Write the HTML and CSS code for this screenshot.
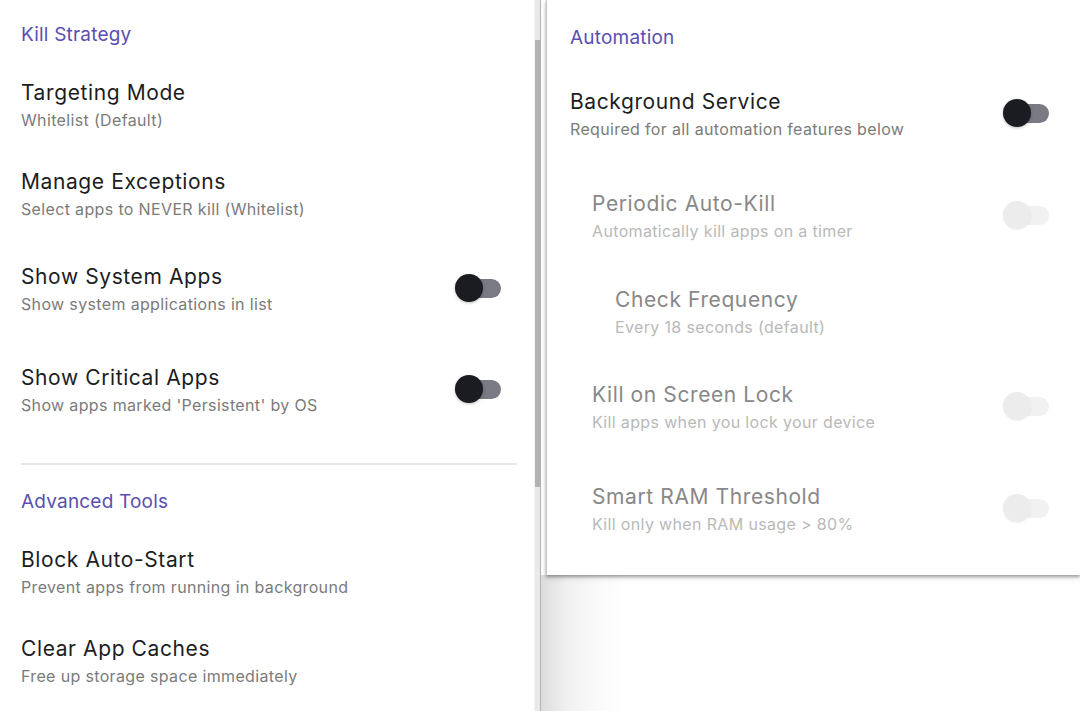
FILE: index.html
```html
<!DOCTYPE html>
<html>
<head>
<meta charset="utf-8">
<link rel="stylesheet" href="styles.css">
</head>
<body>
<div class="screen">
  <div class="left-pane">
    <div class="left-content">
      <div class="section-header first">Kill Strategy</div>
      <div class="row">
        <div class="text"><div class="title">Targeting Mode</div><div class="sub">Whitelist (Default)</div></div>
      </div>
      <div class="row">
        <div class="text"><div class="title">Manage Exceptions</div><div class="sub">Select apps to NEVER kill (Whitelist)</div></div>
      </div>
      <div class="row toggle-row">
        <div class="text"><div class="title">Show System Apps</div><div class="sub">Show system applications in list</div></div>
        <div class="toggle"><span class="track"></span><span class="knob"></span></div>
      </div>
      <div class="row toggle-row">
        <div class="text"><div class="title">Show Critical Apps</div><div class="sub">Show apps marked 'Persistent' by OS</div></div>
        <div class="toggle"><span class="track"></span><span class="knob"></span></div>
      </div>
      <div class="divider"></div>
      <div class="section-header">Advanced Tools</div>
      <div class="row">
        <div class="text"><div class="title">Block Auto-Start</div><div class="sub">Prevent apps from running in background</div></div>
      </div>
      <div class="row">
        <div class="text"><div class="title">Clear App Caches</div><div class="sub">Free up storage space immediately</div></div>
      </div>
    </div>
    <div class="scroll-track"><div class="scroll-thumb"></div></div>
  </div>
  <div class="right-side">
    <div class="panel">
      <div class="section-header first">Automation</div>
      <div class="row toggle-row">
        <div class="text"><div class="title">Background Service</div><div class="sub">Required for all automation features below</div></div>
        <div class="toggle"><span class="track"></span><span class="knob"></span></div>
      </div>
      <div class="row toggle-row disabled indent1">
        <div class="text"><div class="title">Periodic Auto-Kill</div><div class="sub">Automatically kill apps on a timer</div></div>
        <div class="toggle"><span class="track"></span><span class="knob"></span></div>
      </div>
      <div class="row disabled indent2">
        <div class="text"><div class="title">Check Frequency</div><div class="sub">Every 18 seconds (default)</div></div>
      </div>
      <div class="row toggle-row disabled indent1">
        <div class="text"><div class="title">Kill on Screen Lock</div><div class="sub">Kill apps when you lock your device</div></div>
        <div class="toggle"><span class="track"></span><span class="knob"></span></div>
      </div>
      <div class="row toggle-row disabled indent1">
        <div class="text"><div class="title">Smart RAM Threshold</div><div class="sub">Kill only when RAM usage &gt; 80%</div></div>
        <div class="toggle"><span class="track"></span><span class="knob"></span></div>
      </div>
    </div>
    <div class="below"></div>
  </div>
</div>
</body>
</html>
```
FILE: styles.css
```css
* { box-sizing: border-box; }
html, body {
  margin: 0;
  padding: 0;
  width: 1080px;
  height: 711px;
  overflow: hidden;
  background: #ffffff;
  font-family: Inter, "Noto Sans", "Liberation Sans", sans-serif;
}
.screen {
  display: flex;
  height: 711px;
}
.left-pane {
  width: 541px;
  display: flex;
  border-right: 1px solid #b4b4b4;
  background: #fff;
}
.left-content {
  width: 534px;
  padding: 0 17px 0 21px;
}
.scroll-track {
  width: 6px;
  background: #e9e9e9;
  border-left: 1px solid #f4f4f4;
}
.scroll-thumb {
  margin-top: 40px;
  height: 447px;
  background: #b3b3b3;
}
.section-header {
  font-size: 19px;
  line-height: 28px;
  color: #5a4fb0;
  margin-top: 23px;
  margin-bottom: 13px;
  letter-spacing: 0.2px;
}
.section-header.first { margin-top: 21px; }
.panel .section-header.first { margin-top: 24px; }
.row {
  display: flex;
  align-items: center;
  padding: 17px 0 18px;
}
.toggle-row { padding: 23px 0 24px; }
.panel .toggle-row { padding: 23px 0 25px; }
.text { flex: 1; }
.title {
  font-size: 21px;
  line-height: 28px;
  color: #1d1d1f;
  letter-spacing: 0.6px;
}
.sub {
  font-size: 16px;
  line-height: 26px;
  color: #7b7b7b;
  letter-spacing: 0.35px;
}
.divider {
  height: 2px;
  background: #e6e6e6;
  margin-top: 21px;
}
.toggle {
  position: relative;
  width: 46px;
  height: 28px;
  margin-right: 16px;
  margin-bottom: 4px;
  flex: none;
}
.toggle .track {
  position: absolute;
  left: 6px;
  right: 0;
  top: 5px;
  height: 19px;
  border-radius: 10px;
  background: #7a7a84;
}
.toggle .knob {
  position: absolute;
  left: 0;
  top: 0;
  width: 28px;
  height: 28px;
  border-radius: 50%;
  background: #1b1c21;
  box-shadow: 0 1px 3px rgba(0,0,0,0.25);
}
.disabled .title { color: #888888; }
.disabled .sub { color: #b9b9b9; }
.disabled .toggle .track { background: #f1f1f1; }
.disabled .toggle .knob { background: #ececec; box-shadow: 0 1px 2px rgba(0,0,0,0.06); }
.indent1 .text { padding-left: 22px; }
.indent2 .text { padding-left: 45px; }
.right-side {
  flex: 1;
  display: flex;
  flex-direction: column;
  background: #fff;
}
.panel {
  margin-left: 5px;
  height: 575px;
  background: #fff;
  padding: 0 15px 0 23px;
  border-left: 1px solid #c8c8c8;
  box-shadow: 0 2px 3px rgba(0,0,0,0.35), 0 3px 8px rgba(0,0,0,0.08);
  position: relative;
  z-index: 1;
}
.below {
  flex: 1;
  background: linear-gradient(to right, #dcdcdc 0px, #f0f0f0 25px, #fbfbfb 60px, #ffffff 85px, #ffffff 100%);
}
```
